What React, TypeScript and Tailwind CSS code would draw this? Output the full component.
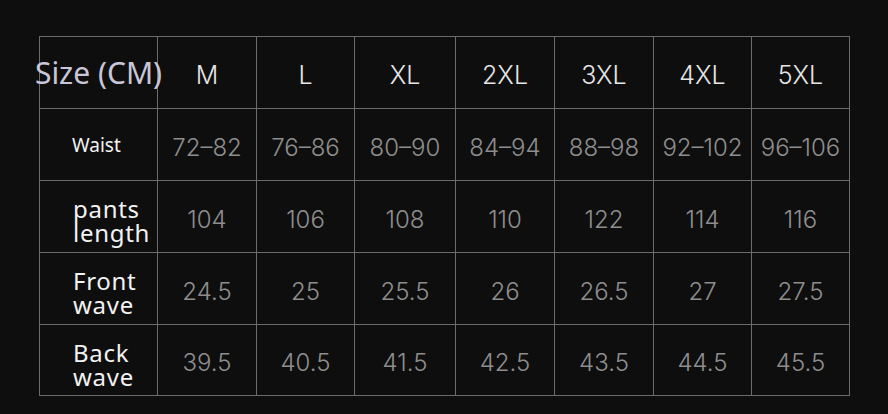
const sizes = ["M", "L", "XL", "2XL", "3XL", "4XL", "5XL"];

const rows: { label: string[]; small?: boolean; values: string[] }[] = [
  { label: ["Waist"], small: true, values: ["72–82", "76–86", "80–90", "84–94", "88–98", "92–102", "96–106"] },
  { label: ["pants", "length"], values: ["104", "106", "108", "110", "122", "114", "116"] },
  { label: ["Front", "wave"], values: ["24.5", "25", "25.5", "26", "26.5", "27", "27.5"] },
  { label: ["Back", "wave"], values: ["39.5", "40.5", "41.5", "42.5", "43.5", "44.5", "45.5"] },
];

export default function App() {
  return (
    <div className="h-[414px] w-full overflow-hidden bg-[#0e0e0e] pl-[39px] pt-[36px]">
      <div className="grid w-fit grid-cols-[118px_99px_98px_101px_99px_99px_98px_98px] grid-rows-[72px_72px_72px_72px_71px] border-l border-t border-[#6b6b6b]">
        <div className="flex items-center justify-center whitespace-nowrap border-b border-r border-[#6b6b6b] font-['Noto_Sans',sans-serif] text-[30px] text-[#c9c6d8]">
          Size (CM)
        </div>
        {sizes.map((s) => (
          <div
            key={s}
            className="flex items-center justify-center border-b border-r border-[#6b6b6b] pt-[7px] font-['Inter',sans-serif] text-[25px] font-light text-[#e6e6e6]"
          >
            {s}
          </div>
        ))}
        {rows.map((r) => (
          <>
            <div
              key={r.label.join(" ")}
              className={
                r.small
                  ? "flex items-center border-b border-r border-[#6b6b6b] pl-[32px] pt-[2px] font-['Noto_Sans',sans-serif] text-[19px] text-[#f2f2f2]"
                  : "flex flex-col justify-center border-b border-r border-[#6b6b6b] pl-[33px] pt-[9px] font-['Noto_Sans',sans-serif] text-[24px] leading-[24px] tracking-[0.03em] text-[#f2f2f2]"
              }
            >
              {r.label.map((l) => (
                <span key={l}>{l}</span>
              ))}
            </div>
            {r.values.map((v, i) => (
              <div
                key={r.label[0] + i}
                className="flex items-center justify-center border-b border-r border-[#6b6b6b] pt-[6px] font-['Inter',sans-serif] text-[24px] font-light text-[#8e8e8e]"
              >
                {v}
              </div>
            ))}
          </>
        ))}
      </div>
    </div>
  );
}
